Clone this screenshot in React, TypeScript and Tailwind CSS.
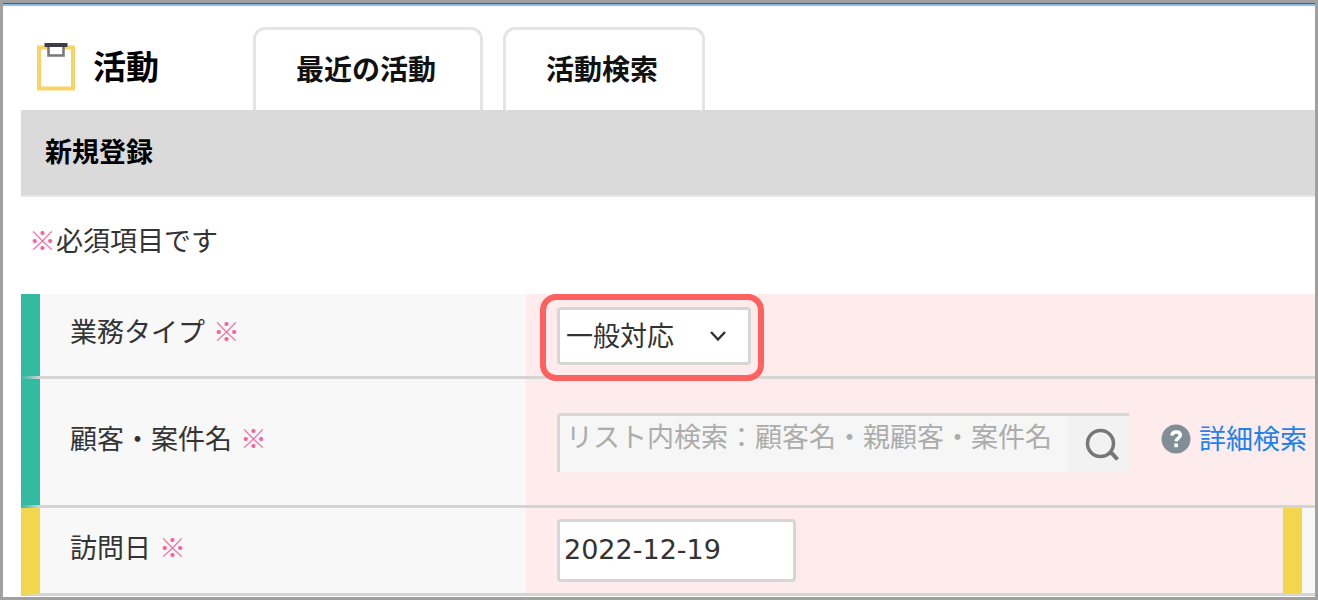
import React from 'react';

const Required = () => <span className="text-[#f4639f]">※</span>;

const ClipboardIcon = () => (
  <svg width="38" height="48" viewBox="0 0 38 48" fill="none" aria-hidden="true">
    <rect x="2" y="4.5" width="34" height="41" fill="#fff" stroke="#f9d368" strokeWidth="4" />
    <path d="M11.5 3v9.500h15V3" fill="#fff" stroke="#77777b" strokeWidth="2.500" />
    <path d="M7.500 2h23" stroke="#3c3c46" strokeWidth="4" />
  </svg>
);

const SearchIcon = () => (
  <svg width="34" height="34" viewBox="0 0 34 34" fill="none" stroke="#777" aria-hidden="true">
    <circle cx="15.500" cy="15.500" r="13" strokeWidth="3.500" />
    <path d="M25 25l2.500 1 5 5.500" strokeWidth="4" />
  </svg>
);

const HelpIcon = () => (
  <svg width="30" height="30" viewBox="0 0 30 30" fill="none" aria-hidden="true">
    <circle cx="15" cy="15" r="14.500" fill="#828e96" />
    <path
      d="M10.800 11.500c.4-2.400 2-3.600 4.400-3.600 2.500 0 4.200 1.300 4.200 3.400 0 2.900-4.200 2.800-4.200 5.900"
      stroke="#fff"
      strokeWidth="3.500"
    />
    <rect x="13.300" y="19.500" width="3.700" height="3.700" fill="#fff" />
  </svg>
);

type FieldRowProps = {
  id: string;
  label: string;
  barClass: string;
  heightClass: string;
  children: React.ReactNode;
};

const FieldRow = ({ id, label, barClass, heightClass, children }: FieldRowProps) => (
  <div className={`flex ${heightClass}`}>
    {/* Category color bar */}
    <div className={`w-[19px] shrink-0 flex flex-col justify-end ${barClass}`}>
      <div className="h-[3px] bg-gradient-to-r from-transparent to-[#d4d4d4]" />
    </div>
    <div className="flex-1 min-w-0 flex border-b-3 border-[#d4d4d4] bg-[#feecec]">
      <label htmlFor={id} className="w-[486px] shrink-0 flex items-center gap-2 bg-[#f8f8f8] pl-[30px] pb-2">
        {label}
        <Required />
      </label>
      {children}
    </div>
  </div>
);

const App = () => {
  return (
    <div className="min-h-screen w-full overflow-hidden border-3 border-[#a0a0a0] bg-white text-[27px] leading-10 text-[#333] font-['Noto_Sans_CJK_JP',sans-serif]">
      <div className="h-[3px] border-t border-[#0f6cc4] bg-[#8cb9ef]" />

      {/* Header */}
      <header className="flex items-end pl-[34px] h-[104px]">
        <div className="w-[216px] shrink-0 flex items-center gap-[18px] pb-[17px]">
          <ClipboardIcon />
          <h1 className="text-[33px] leading-12 pb-1 font-bold text-black">活動</h1>
        </div>
        <nav className="flex gap-5 text-[28px] font-bold text-[#111]">
          <button type="button" className="h-[83px] pl-10 pr-11 pb-1 rounded-t-xl border-3 border-b-0 border-[#e4e4e4]">
            最近の活動
          </button>
          <button type="button" className="h-[83px] pl-10 pr-11 pb-1 rounded-t-xl border-3 border-b-0 border-[#e4e4e4]">
            活動検索
          </button>
        </nav>
      </header>

      <main className="pl-[18px]">
        <h2 className="h-[87px] flex items-center pl-6 pb-1 border-b-2 border-[#e6e6e6] bg-[#dadada] font-bold text-black">
          新規登録
        </h2>
        <p className="h-[97px] flex items-center pl-2 pb-3">
          <Required />
          必須項目です
        </p>

        <form>
          <FieldRow id="type" label="業務タイプ" barClass="bg-[#32bba1]" heightClass="h-[85px]">
            <div className="flex items-center pl-[31px] pt-px">
              <div className="relative">
                <select
                  id="type"
                  className="appearance-none block w-[194px] h-[58px] pl-1.5 pb-0.5 rounded-sm border-3 border-[#d6d6d6] bg-white"
                >
                  <option>一般対応</option>
                </select>
                <svg
                  className="absolute right-6 top-[23px] pointer-events-none"
                  width="18"
                  height="12"
                  viewBox="0 0 18 12"
                  fill="none"
                  stroke="#333"
                  strokeWidth="2.500"
                  aria-hidden="true"
                >
                  <path d="M2 2l7 7.500 7-7.500" />
                </svg>
                {/* Highlight frame */}
                <div className="absolute -top-[13px] -bottom-4 -left-[17px] -right-[13px] rounded-2xl border-6 border-[#ff6060] pointer-events-none" />
              </div>
            </div>
          </FieldRow>

          <FieldRow id="customer" label="顧客・案件名" barClass="bg-[#32bba1]" heightClass="h-[129px]">
            <div className="flex-1 flex items-center pl-[31px] pr-2">
              <div className="flex-1 min-w-0 flex h-[59px] rounded-tl-sm border-t-3 border-l-3 border-[#d6d6d6] bg-[#f6f6f6]">
                <input
                  id="customer"
                  type="text"
                  placeholder="リスト内検索：顧客名・親顧客・案件名"
                  className="flex-1 min-w-0 pl-1.5 pb-4 placeholder:text-[#acacac] outline-none"
                />
                <button type="button" aria-label="検索" className="w-[61px] shrink-0 flex items-center justify-center pt-0.5 pl-1.5 bg-[#f2f2f2]">
                  <SearchIcon />
                </button>
              </div>
              <button type="button" aria-label="ヘルプ" className="ml-8 mr-2 mb-1.5">
                <HelpIcon />
              </button>
              <a href="#" className="shrink-0 pb-2 text-[#1e82eb]">詳細検索</a>
            </div>
          </FieldRow>

          <FieldRow id="date" label="訪問日" barClass="bg-[#f2d64b]" heightClass="h-[88px]">
            <div className="flex-1 flex items-center pl-[31px]">
              <input
                id="date"
                type="text"
                defaultValue="2022-12-19"
                className="w-[239px] h-[63px] pl-1 pb-0.5 rounded-sm border-3 border-[#d3d7d8] bg-white font-['DejaVu_Sans',sans-serif]"
              />
            </div>
            <div className="w-8 shrink-0 border-l-19 border-[#f2d64b] bg-[#f8f8f8]" />
          </FieldRow>
        </form>
      </main>
    </div>
  );
};

export default App;
